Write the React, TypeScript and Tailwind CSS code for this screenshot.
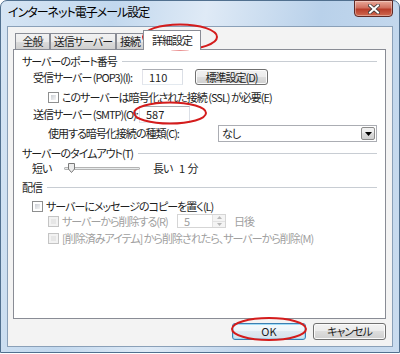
function CheckBox({ disabled }: { disabled?: boolean }) {
  return disabled ? (
    <span className="inline-block h-[11px] w-[11px] shrink-0 border border-[#c4c4c4] bg-[#f2f2f2] p-[2px]">
      <span className="block h-full w-full bg-[#e6e6e6]" />
    </span>
  ) : (
    <span className="inline-block h-[11px] w-[11px] shrink-0 border border-[#8e8f8f] bg-white p-[2px]">
      <span className="block h-full w-full bg-[linear-gradient(135deg,#cbcfd5,#f6f6f6)]" />
    </span>
  );
}

function GroupHeader({ title }: { title: string }) {
  return (
    <div className="flex h-[14px] items-center gap-[5px]">
      <span className="leading-none">{title}</span>
      <div className="h-px flex-1 bg-[#c8cdd3]" />
    </div>
  );
}

function TextBox({ value, className }: { value: string; className: string }) {
  return (
    <div
      className={`flex items-center border border-[#abadb3] border-b-[#e3e9ef] border-l-[#e2e3ea] border-r-[#dbdfe6] bg-white pl-[6px] leading-none tracking-normal ${className}`}
    >
      {value}
    </div>
  );
}

function Tab({ label, className }: { label: string; className: string }) {
  return (
    <div
      className={`flex h-[16px] items-center justify-center border border-b-0 border-[#898c95] bg-[linear-gradient(#f2f2f2,#ebebeb_50%,#dddddd_50%,#cfcfcf)] leading-none ${className}`}
    >
      {label}
    </div>
  );
}

export default function App() {
  return (
    <div className="relative h-[354px] w-[400px] overflow-hidden whitespace-nowrap bg-white font-['Noto_Sans_CJK_JP','Noto_Sans',sans-serif] text-[11px] tracking-[-1px] text-[#1e1e1e] [font-feature-settings:'palt']">
      <div className="flex h-[353px] flex-col rounded-t-[7px] border border-[#51708f] bg-[linear-gradient(100deg,#d6e5f4_0%,#c2d8ee_25%,#dfeaf6_45%,#b9d1ea_70%,#cadcef_100%)] px-[6px] pb-[5px]">
        {/* title bar */}
        <div className="flex h-[25px] items-start justify-between">
          <div className="pl-[1px] pt-[5px] text-[12px] leading-none text-black">
            インターネット電子メール設定
          </div>
          <div className="-mt-px flex h-[17px] w-[39px] items-center justify-center rounded-b-[4px] border border-[#5e2a26] bg-[linear-gradient(#e9a99a,#d0705f_45%,#b83d2a_55%,#d06a50)] shadow-[inset_0_0_0_1px_rgba(255,255,255,0.35)]">
            <svg width="12" height="10" viewBox="0 0 12 10">
              <path d="M2 1.5 L10 8.5 M10 1.5 L2 8.5" stroke="#3a3a3a" strokeWidth="3.6" strokeLinecap="square" />
              <path d="M2 1.5 L10 8.5 M10 1.5 L2 8.5" stroke="#ffffff" strokeWidth="2" strokeLinecap="square" />
            </svg>
          </div>
        </div>

        {/* client area */}
        <div className="flex flex-1 flex-col border border-[#8aa0b8] bg-[#f3f3f3] pb-[6px] pl-[5px] pr-[6px] pt-[3px]">
          <div className="flex h-[19px] items-end pl-[2px]">
            <Tab label="全般" className="w-[35px]" />
            <Tab label="送信サーバー" className="w-[66px]" />
            <Tab label="接続" className="w-[28px]" />
            <div className="relative z-10 -mb-px -ml-px flex h-[20px] w-[58px] items-center justify-center border border-b-0 border-[#898c95] bg-white leading-none">
              詳細設定
            </div>
          </div>

          <div className="flex flex-1 flex-col border border-[#898c95] bg-white pl-[8px] pr-[8px]">
            <div className="mt-[4px]">
              <GroupHeader title="サーバーのポート番号" />
            </div>

            <div className="flex h-[18px] items-center pl-[11px]">
              <span className="w-[109px] leading-none">受信サーバー (POP3)(I):</span>
              <TextBox value="110" className="h-[16px] w-[41px]" />
              <div className="ml-[12px] flex h-[16px] w-[73px] items-center justify-center rounded-[3px] border border-[#707070] bg-[linear-gradient(#f2f2f2,#ebebeb_50%,#dddddd_50%,#cfcfcf)] leading-none shadow-[inset_0_0_0_1px_#fbfbfb]">
                標準設定(D)
              </div>
            </div>

            <div className="mt-[2px] flex h-[18px] items-center gap-[3px] pl-[26px]">
              <CheckBox />
              <span className="leading-none">このサーバーは暗号化された接続 (SSL) が必要(E)</span>
            </div>

            <div className="flex h-[16px] items-center pl-[11px]">
              <span className="w-[106px] leading-none">送信サーバー (SMTP)(O):</span>
              <TextBox value="587" className="h-[17px] w-[51px]" />
            </div>

            <div className="mt-[3px] flex h-[17px] items-center pl-[26px]">
              <span className="w-[170px] leading-none">使用する暗号化接続の種類(C):</span>
              <div className="flex h-[17px] w-[159px] items-center justify-between border border-[#abadb3] bg-white pl-[3px] pr-[1px] leading-none">
                <span>なし</span>
                <div className="flex h-[13px] w-[14px] items-center justify-center rounded-[2px] border border-[#8c8c8c] bg-[linear-gradient(#f2f2f2,#ebebeb_50%,#dddddd_50%,#cfcfcf)]">
                  <svg width="7" height="4" viewBox="0 0 7 4">
                    <path d="M0 0 H7 L3.5 4 Z" fill="#000" />
                  </svg>
                </div>
              </div>
            </div>

            <div className="mt-[4px]">
              <GroupHeader title="サーバーのタイムアウト(T)" />
            </div>

            <div className="mt-[1px] flex h-[14px] items-center pl-[10px]">
              <span className="w-[32px] leading-none">短い</span>
              <div className="relative h-[10px] w-[76px]">
                <div className="absolute left-0 right-0 top-[4px] h-[3px] rounded-[1px] border border-[#b4b4b4] bg-[#e7eaea]" />
                <svg className="absolute left-[4px] top-[0px]" width="7" height="10" viewBox="0 0 7 10">
                  <path d="M0.5 0.5 H6.5 V6 L3.5 9.5 L0.5 6 Z" fill="#ececec" stroke="#7a7a7a" />
                </svg>
              </div>
              <span className="ml-[13px] w-[26px] leading-none">長い</span>
              <span className="leading-none tracking-normal">1 分</span>
            </div>

            <div className="mt-[5px]">
              <GroupHeader title="配信" />
            </div>

            <div className="mt-[5px] flex h-[14px] items-center gap-[3px] pl-[10px]">
              <CheckBox />
              <span className="leading-none">サーバーにメッセージのコピーを置く(L)</span>
            </div>

            <div className="flex h-[16px] items-center pl-[26px] text-[#a0a0a0]">
              <CheckBox disabled />
              <span className="ml-[3px] w-[115px] leading-none">サーバーから削除する(R)</span>
              <div className="flex h-[14px] w-[49px] items-center justify-between border border-[#d5d5d5] bg-white pl-[6px] leading-none">
                <span>5</span>
                <div className="flex h-full w-[13px] flex-col border-l border-[#e2e2e2]">
                  <div className="flex flex-1 items-center justify-center bg-[#f4f4f4]">
                    <svg width="5" height="3" viewBox="0 0 5 3"><path d="M0 3 H5 L2.5 0 Z" fill="#b8b8b8" /></svg>
                  </div>
                  <div className="flex flex-1 items-center justify-center border-t border-[#e2e2e2] bg-[#f4f4f4]">
                    <svg width="5" height="3" viewBox="0 0 5 3"><path d="M0 0 H5 L2.5 3 Z" fill="#b8b8b8" /></svg>
                  </div>
                </div>
              </div>
              <span className="ml-[8px] leading-none">日後</span>
            </div>

            <div className="mt-[2px] flex h-[14px] items-center gap-[3px] pl-[26px] text-[#a0a0a0]">
              <CheckBox disabled />
              <span className="leading-none">[削除済みアイテム] から削除されたら、サーバーから削除(M)</span>
            </div>
          </div>

          <div className="mt-[4px] flex h-[17px] justify-end gap-[7px]">
            <div className="flex w-[74px] items-center justify-center rounded-[3px] border border-[#3c7fb1] bg-[linear-gradient(#f4f9fc,#ecf4f9_50%,#dfeaf2_50%,#d3e2ec)] leading-none tracking-normal shadow-[inset_0_0_0_1px_#9fdcf8]">
              OK
            </div>
            <div className="flex w-[73px] items-center justify-center rounded-[3px] border border-[#707070] bg-[linear-gradient(#f2f2f2,#ebebeb_50%,#dddddd_50%,#cfcfcf)] leading-none shadow-[inset_0_0_0_1px_#fbfbfb]">
              キャンセル
            </div>
          </div>
        </div>
      </div>

      <svg className="pointer-events-none absolute inset-0" width="400" height="354" viewBox="0 0 400 354">
        <ellipse cx="180" cy="37" rx="37" ry="12.5" fill="none" stroke="#d41c1c" strokeWidth="2" />
        <ellipse cx="170" cy="113" rx="36" ry="10.5" fill="none" stroke="#d41c1c" strokeWidth="2" />
        <ellipse cx="269" cy="329" rx="37" ry="11" fill="none" stroke="#d41c1c" strokeWidth="2" />
      </svg>
    </div>
  );
}
